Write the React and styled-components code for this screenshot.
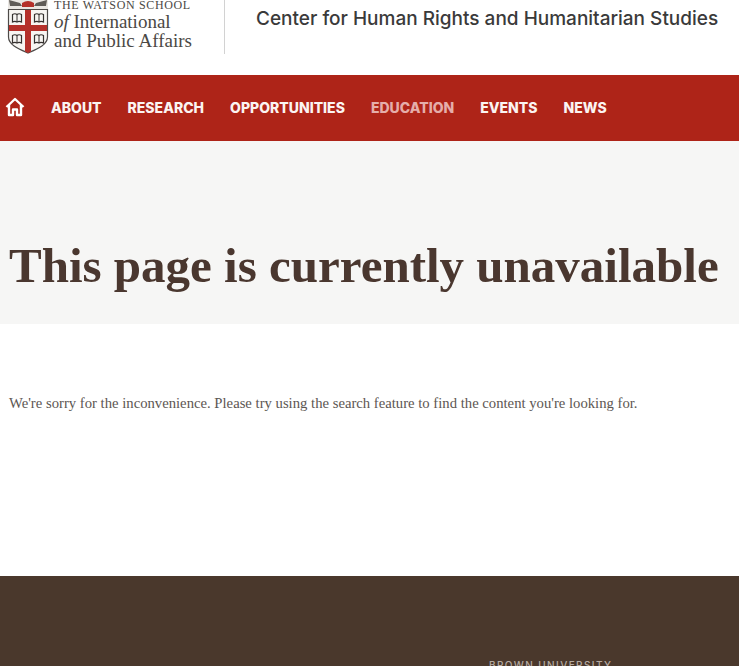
import React from 'react';
import styled, { createGlobalStyle } from 'styled-components';

const GlobalStyle = createGlobalStyle`
  html, body {
    margin: 0;
    padding: 0;
    background: #fff;
  }
  body {
    height: 666px;
    overflow: hidden;
  }
`;

const navItems = ['ABOUT', 'RESEARCH', 'OPPORTUNITIES', 'EDUCATION', 'EVENTS', 'NEWS'];

const Book = ({ x, y }) => (
  <g transform={`translate(${x} ${y})`}>
    <path d="M0.5 1.5 Q3 0 5 1.5 Q7 0 9.5 1.5 V9 Q7 7.8 5 9 Q3 7.8 0.5 9 Z" fill="#f7f5f2" stroke="#35312f" strokeWidth="1.2" />
    <path d="M5 1.5 V9" stroke="#35312f" strokeWidth="1" />
  </g>
);

const Shield = () => (
  <svg width="42" height="56" viewBox="0 0 42 56" fill="none">
    <path d="M1 1 H41 V11 H1 Z" fill="#e9e6e2" />
    <path d="M2 2 L13 5 L15 8 L3 8 Z M40 2 L29 5 L27 8 L39 8 Z" fill="#5f5b57" />
    <path d="M15 5 Q21 1 27 5 L27 9 L15 9 Z" fill="#b4302a" />
    <path d="M1.5 11.5 H40.5 V39 C40.5 47 30 51 21 55 C12 51 1.5 47 1.5 39 Z" fill="#f7f5f2" stroke="#4d4a48" strokeWidth="1.2" />
    <path d="M18 12 H24 V53.5 L21 55 L18 53.5 Z" fill="#b4302a" />
    <path d="M2 27 H40 V33 H2 Z" fill="#b4302a" />
    <Book x={5} y={15} />
    <Book x={27} y={15} />
    <Book x={5} y={36} />
    <Book x={27} y={36} />
  </svg>
);

const HomeIcon = () => (
  <svg width="20" height="20" viewBox="0 0 20 20" fill="none" stroke="#fff" strokeWidth="2.4" strokeLinejoin="round">
    <path d="M1.5 10 L10 2 L18.5 10" />
    <path d="M4 8 V18 H8 V12.5 H12 V18 H16 V8" />
  </svg>
);

export default function App() {
  return (
    <Page>
      <GlobalStyle />
      <Header>
        <Logo>
          <Shield />
          <LogoText>
            <SchoolLine>THE WATSON SCHOOL</SchoolLine>
            <LogoLine><em>of</em> International</LogoLine>
            <LogoLine>and Public Affairs</LogoLine>
          </LogoText>
        </Logo>
        <Divider />
        <CenterName>Center for Human Rights and Humanitarian Studies</CenterName>
      </Header>
      <Nav>
        <HomeLink><HomeIcon /></HomeLink>
        {navItems.map((item) => (
          <NavLink key={item} $active={item === 'EDUCATION'}>{item}</NavLink>
        ))}
      </Nav>
      <Hero>
        <Title>This page is currently unavailable</Title>
      </Hero>
      <Content>
        <Message>We're sorry for the inconvenience. Please try using the search feature to find the content you're looking for.</Message>
      </Content>
      <Footer>
        <FooterLabel>BROWN UNIVERSITY</FooterLabel>
      </Footer>
    </Page>
  );
}

const Page = styled.div`
  width: 739px;
  height: 666px;
  overflow: hidden;
  display: flex;
  flex-direction: column;
`;

const Header = styled.header`
  height: 75px;
  flex: none;
  overflow: hidden;
  display: flex;
  align-items: flex-end;
  padding: 0 0 21px 7px;
  box-sizing: border-box;
`;

const Logo = styled.div`
  display: flex;
  align-items: flex-end;
  gap: 5px;
  width: 217px;
  flex: none;
`;

const LogoText = styled.div`
  display: flex;
  flex-direction: column;
  font-family: "Liberation Serif", serif;
  color: #4b4845;
  margin-bottom: 4px;
`;

const SchoolLine = styled.div`
  font-size: 12px;
  line-height: 12px;
  letter-spacing: 0.65px;
  margin-bottom: 1px;
  white-space: nowrap;
`;

const LogoLine = styled.div`
  font-size: 19px;
  line-height: 19px;
  white-space: nowrap;
`;

const Divider = styled.div`
  width: 1px;
  height: 60px;
  background: #d2d2d2;
  flex: none;
`;

const CenterName = styled.div`
  font-family: "Inter", sans-serif;
  font-weight: 500;
  font-size: 19px;
  line-height: 22px;
  color: #3a3a3a;
  white-space: nowrap;
  margin-left: 31px;
  align-self: flex-start;
  margin-top: 8px;
`;

const Nav = styled.nav`
  height: 66px;
  flex: none;
  background: #ae2418;
  display: flex;
  align-items: center;
  gap: 26px;
  padding: 0 0 2px 5px;
  box-sizing: border-box;
`;

const HomeLink = styled.a`
  display: flex;
  width: 20px;
  height: 20px;
`;

const NavLink = styled.a`
  font-family: "Inter", sans-serif;
  font-weight: 800;
  font-size: 14px;
  color: ${({ $active }) => ($active ? '#e5aeaa' : '#fbf4f2')};
`;

const Hero = styled.div`
  height: 183px;
  flex: none;
  background: #f6f6f5;
  display: flex;
  align-items: flex-end;
  padding: 0 0 30px 9px;
  box-sizing: border-box;
`;

const Title = styled.h1`
  margin: 0;
  font-family: "Liberation Serif", serif;
  font-weight: 700;
  font-size: 49px;
  line-height: 56px;
  color: #4a372f;
  white-space: nowrap;
`;

const Content = styled.main`
  height: 252px;
  flex: none;
  padding: 71px 0 0 9px;
  box-sizing: border-box;
`;

const Message = styled.p`
  margin: 0;
  font-family: "Liberation Serif", serif;
  font-size: 14.7px;
  line-height: 16px;
  color: #5c5652;
  white-space: nowrap;
`;

const Footer = styled.footer`
  flex: 1;
  background: #4a382c;
  padding: 83px 0 0 489px;
  box-sizing: border-box;
`;

const FooterLabel = styled.div`
  font-family: "Inter", sans-serif;
  font-weight: 500;
  font-size: 10px;
  line-height: 12px;
  letter-spacing: 1.4px;
  color: #b5aaa2;
  white-space: nowrap;
`;
